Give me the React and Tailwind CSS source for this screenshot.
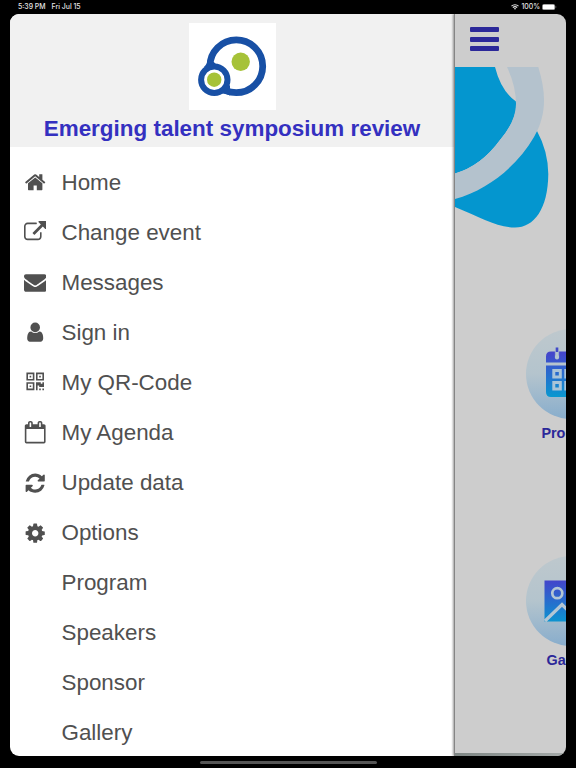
const ICONS = {
  home: 'M1472 992v480q0 26-19 45t-45 19h-384v-384h-256v384h-384q-26 0-45-19t-19-45v-480q0-1 .5-3t.5-3l575-474 575 474q1 2 1 6zm223-69l-62 74q-8 9-21 11h-3q-13 0-21-7l-692-577-692 577q-12 8-24 7-13-2-21-11l-62-74q-8-10-7-23.5t11-21.5l719-599q32-26 76-26t76 26l244 204v-195q0-14 9-23t23-9h192q14 0 23 9t9 23v408l219 182q10 8 11 21.5t-7 23.5z',
  external:
    'M1408 928v320q0 119-84.5 203.5t-203.5 84.5h-832q-119 0-203.5-84.5t-84.5-203.5v-832q0-119 84.5-203.5t203.5-84.5h704q14 0 23 9t9 23v64q0 14-9 23t-23 9h-704q-66 0-113 47t-47 113v832q0 66 47 113t113 47h832q66 0 113-47t47-113v-320q0-14 9-23t23-9h64q14 0 23 9t9 23zm384-864v512q0 26-19 45t-45 19-45-19l-176-176-652 652q-10 10-23 10t-23-10l-114-114q-10-10-10-23t10-23l652-652-176-176q-19-19-19-45t19-45 45-19h512q26 0 45 19t19 45z',
  envelope:
    'M1792 710v794q0 66-47 113t-113 47h-1472q-66 0-113-47t-47-113v-794q44 49 101 87 362 246 497 345 57 42 92.5 65.5t94.5 48 110 24.5h2q51 0 110-24.5t94.5-48 92.5-65.5q170-123 498-345 57-39 100-87zm0-294q0 79-49 151t-122 123q-376 261-468 325-10 7-42.5 31t-54 38.5-52 32.5-57.5 27-50 9h-2q-23 0-50-9t-57.5-27-52-32.5-54-38.5-42.5-31q-91-64-262-182.5t-205-142.5q-62-42-117-115.5t-55-136.5q0-78 41.5-130t118.5-52h1472q65 0 112.5 47t47.5 113z',
  user: 'M1536 1399q0 109-62.5 187t-150.5 78h-854q-88 0-150.5-78t-62.5-187q0-85 8.5-160.5t31.5-152 58.5-131 94-89 134.5-34.5q131 128 313 128t313-128q76 0 134.5 34.5t94 89 58.5 131 31.5 152 8.5 160.5zm-256-887q0 159-112.5 271.5t-271.5 112.5-271.5-112.5-112.5-271.5 112.5-271.5 271.5-112.5 271.5 112.5 112.5 271.5z',
  qrcode:
    'M576 1152v128h-128v-128h128zm0-768v128h-128v-128h128zm768 0v128h-128v-128h128zm-1024 1023h384v-383h-384v383zm0-767h384v-384h-384v384zm768 0h384v-384h-384v384zm-256 256v640h-640v-640h640zm512 512v128h-128v-128h128zm256 0v128h-128v-128h128zm0-512v384h-384v-128h-128v384h-128v-640h384v128h128v-128h128zm-768-768v640h-640v-640h640zm768 0v640h-640v-640h640z',
  calendar:
    'M192 1664h1408v-1024h-1408v1024zm384-1216v-288q0-14-9-23t-23-9h-64q-14 0-23 9t-9 23v288q0 14 9 23t23 9h64q14 0 23-9t9-23zm768 0v-288q0-14-9-23t-23-9h-64q-14 0-23 9t-9 23v288q0 14 9 23t23 9h64q14 0 23-9t9-23zm384-64v1280q0 52-38 90t-90 38h-1408q-52 0-90-38t-38-90v-1280q0-52 38-90t90-38h128v-96q0-66 47-113t113-47h64q66 0 113 47t47 113v96h384v-96q0-66 47-113t113-47h64q66 0 113 47t47 113v96h128q52 0 90 38t38 90z',
  refresh:
    'M1639 1056q0 5-1 7-64 268-268 434.5t-478 166.5q-146 0-282.5-55t-243.5-157l-129 129q-19 19-45 19t-45-19-19-45v-448q0-26 19-45t45-19h448q26 0 45 19t19 45-19 45l-137 137q71 66 161 102t187 36q134 0 250-65t186-179q11-17 53-117 8-23 30-23h192q13 0 22.5 9.5t9.5 22.5zm25-800v448q0 26-19 45t-45 19h-448q-26 0-45-19t-19-45 19-45l138-138q-148-137-349-137-134 0-250 65t-186 179q-11 17-53 117-8 23-30 23h-199q-13 0-22.5-9.5t-9.5-22.5v-7q65-268 270-434.5t480-166.5q146 0 284 55.5t245 156.5l130-129q19-19 45-19t45 19 19 45z',
  cog: 'M1152 896q0-106-75-181t-181-75-181 75-75 181 75 181 181 75 181-75 75-181zm512-109v222q0 12-8 23t-20 13l-185 28q-19 54-39 91 35 50 107 138 10 12 10 25t-9 23q-27 37-99 108t-94 71q-12 0-26-9l-138-108q-44 23-91 38-16 136-29 186-7 28-36 28h-222q-14 0-24.5-8.5t-11.5-21.5l-28-184q-49-16-90-37l-141 107q-10 9-25 9-14 0-25-11-126-114-165-168-7-10-7-23 0-12 8-23 15-21 51-66.5t54-70.5q-27-50-41-99l-183-27q-13-2-21-12.5t-8-23.5v-222q0-12 8-23t19-13l186-28q14-46 39-92-40-57-107-138-10-12-10-24 0-10 9-23 26-36 98.5-107.5t94.5-71.5q13 0 26 10l138 107q44-23 91-38 16-136 29-186 7-28 36-28h222q14 0 24.5 8.5t11.5 21.5l28 184q49 16 90 37l142-107q9-9 24-9 13 0 25 10 129 119 165 170 7 8 7 22 0 12-8 23-15 21-51 66.5t-54 70.5q26 50 41 98l183 28q13 2 21 12.5t8 23.5z',
}

const MENU = [
  { label: 'Home', icon: 'home' },
  { label: 'Change event', icon: 'external' },
  { label: 'Messages', icon: 'envelope' },
  { label: 'Sign in', icon: 'user' },
  { label: 'My QR-Code', icon: 'qrcode' },
  { label: 'My Agenda', icon: 'calendar' },
  { label: 'Update data', icon: 'refresh' },
  { label: 'Options', icon: 'cog' },
  { label: 'Program' },
  { label: 'Speakers' },
  { label: 'Sponsor' },
  { label: 'Gallery' },
]

function StatusBar() {
  return (
    <div className="flex h-[14px] items-center justify-between pl-[18px] pr-[19px] font-['Inter',sans-serif] text-[6.9px] font-medium leading-none text-[#e4e4e4]">
      <div className="flex gap-[6px]">
        <span>5:39 PM</span>
        <span>Fri Jul 15</span>
      </div>
      <div className="flex items-center gap-[2px]">
        <svg viewBox="0 0 16 12" className="h-[6px] w-[8px]" fill="none" stroke="currentColor" strokeWidth="2.2">
          <path d="M1 4.4a10 10 0 0 1 14 0M3.7 7.2a6.2 6.2 0 0 1 8.6 0" />
          <path d="M8 11.5 5.7 9.2a3.3 3.3 0 0 1 4.6 0z" fill="currentColor" stroke="none" />
        </svg>
        <span>100%</span>
        <svg viewBox="0 0 15 6" className="h-[6px] w-[15px]">
          <rect x=".4" y=".3" width="12.4" height="5.4" rx="1.5" fill="#fff" stroke="#777" strokeWidth=".5" />
          <path d="M13.6 2v2q.8-.3.8-1t-.8-1" fill="#888" />
        </svg>
      </div>
    </div>
  )
}

function Logo() {
  return (
    <svg viewBox="0 0 87 87" className="h-[87px] w-[87px] bg-white">
      <circle cx="47.3" cy="43.3" r="26.4" fill="#fff" stroke="#1850a5" strokeWidth="6.8" />
      <path d="M15 44Q19 40 19.500 34L29 43zM30 71Q35 69.500 41 72.500L41 62z" fill="#1850a5" />
      <circle cx="25.3" cy="56.7" r="13.2" fill="#fff" stroke="#1850a5" strokeWidth="6" />
      <circle cx="51.7" cy="38.7" r="9.2" fill="#a6c238" />
      <circle cx="25.2" cy="56.7" r="7.2" fill="#a6c238" />
    </svg>
  )
}

function Drawer() {
  return (
    <aside className="flex w-[444px] shrink-0 flex-col overflow-hidden bg-white">
      <header className="flex h-[133px] shrink-0 flex-col items-center bg-[#f1f1f1] pt-[9px]">
        <Logo />
        <h1 className="mt-[6px] whitespace-nowrap text-[22.45px] font-bold leading-[26px] text-[#3430c0]">
          Emerging talent symposium review
        </h1>
      </header>
      <nav className="flex flex-col pt-[10.500px]">
        {MENU.map((item) => (
          <a key={item.label} className="flex h-[50.04px] shrink-0 items-center pl-[14px] text-[22.4px] text-[#505050]">
            <span className="flex w-[37.5px] shrink-0">
              {item.icon && (
                <svg viewBox="0 0 1792 1792" className="h-[22.4px] w-[22.4px]" fill="currentColor">
                  <path d={ICONS[item.icon]} />
                </svg>
              )}
            </span>
            {item.label}
          </a>
        ))}
      </nav>
    </aside>
  )
}

function Artwork() {
  return (
    <svg viewBox="0 0 111 165" className="h-[165px] w-[111px] shrink-0">
      <path d="M0 0H40Q46 24 61 34.500Q63 52 45 73Q26 99 0 106.500z" fill="#0496cf" />
      <path d="M82 64Q93 84 93.300 107C93 142 79 160.500 60 160.500C42 160.500 25 150 0 140V130z" fill="#0496cf" />
      <path d="M52 0H83.300C92 28 91 49 79 70C62 99 33 123 0 132V106.500Q26 99 45 73Q61 54 61 37Q61 19 52 0z" fill="#b4c2cd" />
    </svg>
  )
}

function ProgramIcon() {
  return (
    <>
      <path d="M20 33.500V27.500q0-5 5-5h40q5 0 5 5v6zM20 36.500h50v26.500q0 5-5 5H25q-5 0-5-5z" fill="url(#tile)" />
      <path d="M31 20v8.500" stroke="#b3c4cf" strokeWidth="4.200" strokeLinecap="round" />
      <path d="M31 18.500v8" stroke="#4149c8" strokeWidth="2.600" />
      <path d="M31 23v6" stroke="#b3c4cf" strokeWidth="2.600" />
      <g fill="none" stroke="#aac4d7" strokeWidth="3">
        <rect x="27.800" y="41.500" width="6.500" height="6.500" />
        <rect x="39.800" y="41.500" width="6.500" height="6.500" />
        <rect x="27.800" y="53.500" width="6.500" height="6.500" />
        <rect x="39.800" y="53.500" width="6.500" height="6.500" />
      </g>
    </>
  )
}

function GalleryIcon() {
  return (
    <>
      <path d="M18.500 24.500h53v41h-53z" fill="url(#tile)" />
      <circle cx="31.300" cy="37.200" r="5" fill="none" stroke="#b3c6d4" strokeWidth="2.700" />
      <path d="M19 65 36 48.500l18 18" fill="none" stroke="#b3c6d4" strokeWidth="3.200" />
    </>
  )
}

function Tile({ label, children }) {
  return (
    <div className="flex w-[90px] flex-col items-center">
      <svg viewBox="0 0 90 90" className="h-[90px] w-[90px]">
        <defs>
          <linearGradient id="disc" x1="0" y1="0" x2="0" y2="1">
            <stop offset="0" stopColor="#bec8cd" />
            <stop offset=".5" stopColor="#b4c4cd" />
            <stop offset="1" stopColor="#88adcc" />
          </linearGradient>
          <linearGradient id="tile" x1="0" y1="20" x2="0" y2="68" gradientUnits="userSpaceOnUse">
            <stop offset=".1" stopColor="#4346cb" />
            <stop offset="1" stopColor="#0898d0" />
          </linearGradient>
        </defs>
        <circle cx="45" cy="45" r="45" fill="url(#disc)" />
        {children}
      </svg>
      <span className="mt-[6px] text-[14.4px] font-bold leading-[17px] text-[#2b2899]">{label}</span>
    </div>
  )
}

function EventPage() {
  return (
    <main className="flex w-[112px] flex-col overflow-hidden border-l border-[#858585] bg-[#cdcdcd] shadow-[-1px_0_2px_rgba(0,0,0,0.4)]">
      <button type="button" className="flex h-[53px] shrink-0 flex-col gap-[4.500px] pl-[15px] pt-[13.300px]">
        <span className="h-[5px] w-[28.500px] rounded-[1px] bg-[#2b2899]" />
        <span className="h-[5px] w-[28.500px] rounded-[1px] bg-[#2b2899]" />
        <span className="h-[5px] w-[28.500px] rounded-[1px] bg-[#2b2899]" />
      </button>
      <Artwork />
      <div className="flex w-[180px] flex-col gap-[113.500px] pl-[71px] pt-[97px]">
        <Tile label="Program">
          <ProgramIcon />
        </Tile>
        <Tile label="Gallery">
          <GalleryIcon />
        </Tile>
      </div>
      <div className="mt-auto h-[3px] shrink-0 bg-linear-to-r from-[#7f8785] to-[#a5aaa9]" />
    </main>
  )
}

export default function App() {
  return (
    <div className="flex h-[768px] w-[576px] flex-col overflow-hidden bg-black font-['Liberation_Sans',Arial,sans-serif]">
      <StatusBar />
      <div className="mx-[10px] flex h-[741.500px] w-[556px] shrink-0 overflow-hidden rounded-[9px]">
        <Drawer />
        <EventPage />
      </div>
      <div className="mx-auto mt-[5px] h-[3px] w-[177px] rounded-full bg-[#555]" />
    </div>
  )
}
